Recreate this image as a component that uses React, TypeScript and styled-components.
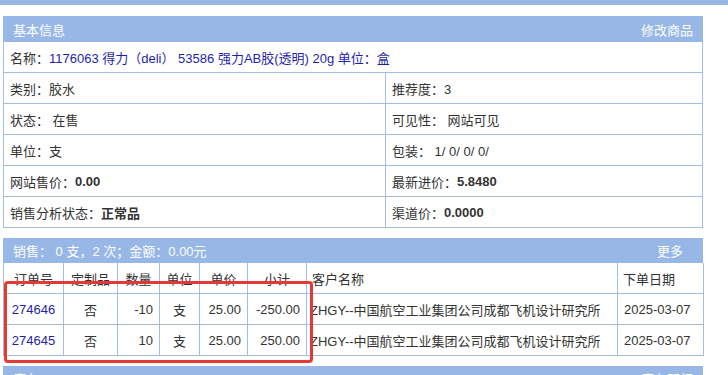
import React from "react";
import styled, { createGlobalStyle } from "styled-components";

const BLUE = "#97b8e6";
const LINE = "#a3bde2";
const LINK = "#1f1fa8";

const GlobalStyle = createGlobalStyle`
  html, body { margin: 0; padding: 0; background: #fff; }
  body {
    font-family: "Liberation Sans", Arial, "Noto Sans CJK SC", sans-serif;
    font-size: 13px;
    color: #333;
  }
`;

const TopStrip = styled.div`
  height: 5px;
  background: ${BLUE};
`;

const Page = styled.div`
  display: flex;
  flex-direction: column;
  gap: 10px;
  padding: 11px 0 0 3px;
  width: 700px;
`;

const Panel = styled.section`
  position: relative;
  width: 700px;
`;

const PanelHeader = styled.div<{ $h: number; $pr?: number }>`
  height: ${(p) => p.$h}px;
  background: ${BLUE};
  color: #fff;
  display: flex;
  align-items: center;
  justify-content: space-between;
  padding: 0 ${(p) => p.$pr ?? 10}px 0 10px;
`;

const InfoGrid = styled.div`
  display: grid;
  grid-template-columns: 381px 1fr;
  border-left: 1px solid ${LINE};
  border-right: 1px solid ${LINE};
`;

const Cell = styled.div<{ $full?: boolean; $right?: boolean }>`
  grid-column: ${(p) => (p.$full ? "1 / span 2" : "auto")};
  height: 30px;
  display: flex;
  align-items: center;
  padding: 0 6px;
  border-bottom: 1px solid ${LINE};
  border-left: ${(p) => (p.$right ? `1px solid ${LINE}` : "none")};
  white-space: pre;
`;

const Link = styled.span`
  color: ${LINK};
`;

const Strong = styled.b`
  font-weight: bold;
`;

const Table = styled.table`
  width: 700px;
  border-collapse: collapse;
  table-layout: fixed;
`;

const Th = styled.th<{ $align?: string }>`
  height: 30px;
  padding: 0 5px;
  font-weight: normal;
  text-align: ${(p) => p.$align ?? "center"};
  border: 1px solid ${LINE};
  border-top: none;
  white-space: nowrap;
`;

const Td = styled.td<{ $align?: string }>`
  height: 30px;
  padding: 0 6px;
  text-align: ${(p) => p.$align ?? "center"};
  border: 1px solid ${LINE};
  white-space: nowrap;
  overflow: hidden;
`;

const Highlight = styled.div`
  position: absolute;
  left: 1px;
  top: 43px;
  width: 309px;
  height: 82px;
  box-sizing: border-box;
  border: 3px solid #e23a36;
  border-radius: 4px;
  pointer-events: none;
`;

const cols = [60, 54, 42, 40, 48, 59, 311, 86];

const orders = [
  { no: "274646", custom: "否", qty: "-10", unit: "支", price: "25.00", sub: "-250.00", cust: "ZHGY--中国航空工业集团公司成都飞机设计研究所", date: "2025-03-07" },
  { no: "274645", custom: "否", qty: "10", unit: "支", price: "25.00", sub: "250.00", cust: "ZHGY--中国航空工业集团公司成都飞机设计研究所", date: "2025-03-07" },
];

export default function App() {
  return (
    <>
      <GlobalStyle />
      <TopStrip />
      <Page>
        <Panel>
          <PanelHeader $h={26}>
            <span>基本信息</span>
            <span>修改商品</span>
          </PanelHeader>
          <InfoGrid>
            <Cell $full>
              名称：<Link>1176063 得力（deli） 53586 强力AB胶(透明) 20g 单位：盒</Link>
            </Cell>
            <Cell>类别：胶水</Cell>
            <Cell $right>推荐度：3</Cell>
            <Cell>状态： 在售</Cell>
            <Cell $right>可见性： 网站可见</Cell>
            <Cell>单位：支</Cell>
            <Cell $right>包装： 1/ 0/ 0/ 0/</Cell>
            <Cell>网站售价：<Strong>0.00</Strong></Cell>
            <Cell $right>最新进价：<Strong>5.8480</Strong></Cell>
            <Cell>销售分析状态：<Strong>正常品</Strong></Cell>
            <Cell $right>渠道价：<Strong>0.0000</Strong></Cell>
          </InfoGrid>
        </Panel>

        <Panel>
          <PanelHeader $h={25} $pr={20}>
            <span>销售： 0 支，2 次；金额：0.00元</span>
            <span>更多</span>
          </PanelHeader>
          <Table>
            <colgroup>
              {cols.map((w, i) => (
                <col key={i} style={{ width: w }} />
              ))}
            </colgroup>
            <thead>
              <tr>
                <Th>订单号</Th>
                <Th>定制品</Th>
                <Th>数量</Th>
                <Th>单位</Th>
                <Th>单价</Th>
                <Th>小计</Th>
                <Th $align="left">客户名称</Th>
                <Th $align="left">下单日期</Th>
              </tr>
            </thead>
            <tbody>
              {orders.map((o) => (
                <tr key={o.no}>
                  <Td><Link>{o.no}</Link></Td>
                  <Td>{o.custom}</Td>
                  <Td $align="right">{o.qty}</Td>
                  <Td>{o.unit}</Td>
                  <Td $align="right">{o.price}</Td>
                  <Td $align="right">{o.sub}</Td>
                  <Td $align="left" style={{ paddingLeft: 3 }}>{o.cust}</Td>
                  <Td $align="left">{o.date}</Td>
                </tr>
              ))}
            </tbody>
          </Table>
          <Highlight />
        </Panel>

        <Panel>
          <PanelHeader $h={25}>
            <span>库存： 12</span>
            <span>库存明细</span>
          </PanelHeader>
        </Panel>
      </Page>
    </>
  );
}
